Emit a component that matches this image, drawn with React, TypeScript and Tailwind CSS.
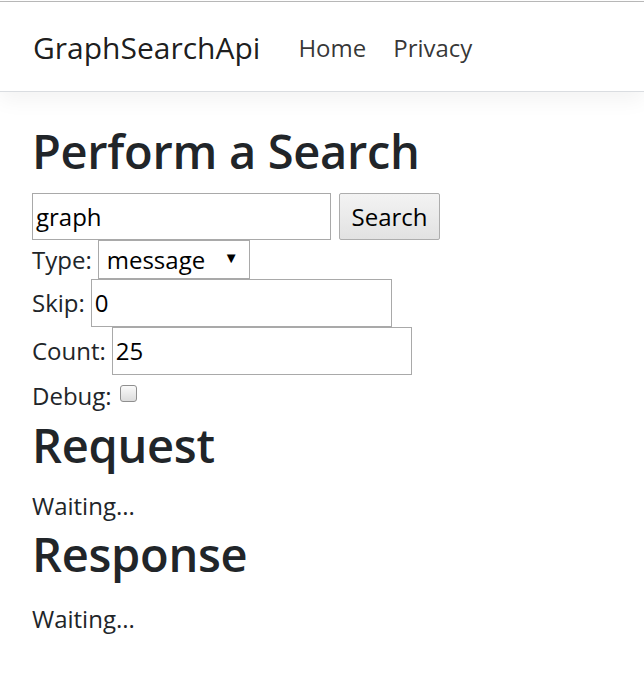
import React from "react";

export default function App() {
  return (
    <div className="min-h-[677px] bg-white text-[#212529]" style={{ fontFamily: '"Open Sans", "Noto Sans", sans-serif' }}>
      <div className="h-px" />
      <div className="h-px bg-[#b9b9b9]" />
      <nav className="h-[90px] flex items-center bg-white border-b border-[#dadde1] shadow-[0_8px_20px_rgba(0,0,0,0.05)] px-[33px] pt-[3px]">
        <span className="text-[30px] text-black/90 leading-none">GraphSearchApi</span>
        <div className="flex items-center ml-[38px] gap-[27px] text-[24px] text-black/80 leading-none">
          <span>Home</span>
          <span>Privacy</span>
        </div>
      </nav>
      <main className="px-[32px] pt-[31px]">
        <h1 className="text-[47px] font-semibold leading-[1.2] mb-[14px] tracking-[-0.3px]">Perform a Search</h1>
        <div className="text-[24px] leading-[1.5]">
          <div className="flex items-center gap-[8px]">
            <div className="w-[299px] h-[47px] border border-[#a9a9a9] px-[3px] flex items-center text-black">graph</div>
            <div className="w-[101px] h-[47px] border border-[#adadad] rounded-[2px] bg-gradient-to-b from-[#f3f3f3] to-[#e2e2e2] flex items-center justify-center text-black">Search</div>
          </div>
          <div className="flex items-center h-[39px]">
            <span>Type:</span>
            <div className="ml-[6px] w-[152px] h-[39px] border border-[#a9a9a9] flex items-center pl-[8px] pr-[10px] justify-between text-black">
              <span>message</span>
              <span className="text-[15px] -mt-[5px]">▼</span>
            </div>
          </div>
          <div className="flex items-center h-[48px]">
            <span>Skip:</span>
            <div className="ml-[6px] w-[301px] h-[48px] border border-[#a9a9a9] px-[3px] flex items-center text-black">0</div>
          </div>
          <div className="flex items-center h-[48px]">
            <span>Count:</span>
            <div className="ml-[6px] w-[300px] h-[48px] border border-[#a9a9a9] px-[3px] flex items-center text-black">25</div>
          </div>
          <div className="flex items-center h-[42px]">
            <span>Debug:</span>
            <div className="ml-[8px] -mt-[5px] w-[17px] h-[17px] rounded-[3px] border border-[#8f8f8f] bg-gradient-to-b from-[#fafafa] to-[#dcdcdc]" />
          </div>
        </div>
        <h2 className="text-[47px] font-semibold leading-[1.2] mb-[14px] tracking-[-0.3px]">Request</h2>
        <p className="text-[24px] leading-[1.5] mb-[2px]">Waiting...</p>
        <h2 className="text-[47px] font-semibold leading-[1.2] mb-[19px] tracking-[-0.3px]">Response</h2>
        <p className="text-[24px] leading-[1.5]">Waiting...</p>
      </main>
    </div>
  );
}
